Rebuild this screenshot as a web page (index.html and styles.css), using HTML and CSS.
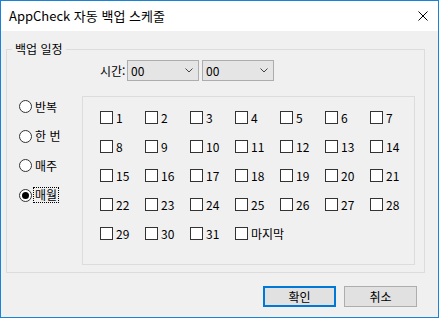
FILE: index.html
```html
<!doctype html>
<html lang="ko">

<head>
  <meta charset="utf-8">
  <link rel="stylesheet" href="styles.css">
  <title>AppCheck 자동 백업 스케줄</title>
</head>

<body>
  <div class="window">
    <div class="titlebar">
      <span class="title">AppCheck 자동 백업 스케줄</span>
      <svg class="close" viewBox="0 0 10 10">
        <path d="M0.5 0.5L9.5 9.5M9.5 0.5L0.5 9.5" stroke="#000" stroke-width="1" fill="none" />
      </svg>
    </div>
    <div class="content">
      <fieldset class="group">
        <legend>백업 일정</legend>
        <div class="time-row">
          <span class="time-label">시간:</span>
          <div class="combo">
            <span>00</span>
            <svg class="chevron" viewBox="0 0 8 5"><path d="M0.5 0.5L4 4L7.5 0.5" stroke="#444" fill="none" /></svg>
          </div>
          <div class="combo">
            <span>00</span>
            <svg class="chevron" viewBox="0 0 8 5"><path d="M0.5 0.5L4 4L7.5 0.5" stroke="#444" fill="none" /></svg>
          </div>
        </div>
        <div class="schedule">
          <div class="modes">
            <div class="radio"><span class="radio-mark"></span><span class="radio-text">반복</span></div>
            <div class="radio"><span class="radio-mark"></span><span class="radio-text">한 번</span></div>
            <div class="radio"><span class="radio-mark"></span><span class="radio-text">매주</span></div>
            <div class="radio checked"><span class="radio-mark"></span><span class="radio-text">매월</span></div>
          </div>
          <div class="days" id="days"></div>
        </div>
      </fieldset>
      <div class="buttons">
        <button class="btn default">확인</button>
        <button class="btn">취소</button>
      </div>
    </div>
  </div>
  <script>
    var days = document.getElementById("days")
    var labels = []
    for (var i = 1; i <= 31; i++) labels.push(String(i))
    labels.push("마지막")

    labels.forEach(function (text) {
      var item = document.createElement("div")
      item.className = "check"
      item.innerHTML = '<span class="box"></span><span class="check-text"></span>'
      item.querySelector(".check-text").textContent = text
      days.appendChild(item)
    })
  </script>
</body>

</html>
```

FILE: styles.css
```css
body {
  margin: 0;
  font-family: "Noto Sans CJK KR", "Noto Sans", sans-serif;
  font-size: 12px;
  color: #000;
}

.window {
  width: 439px;
  height: 318px;
  box-sizing: border-box;
  border: 1px solid #1883d7;
  background: #f0f0f0;
  display: flex;
  flex-direction: column;
}

.titlebar {
  height: 30px;
  flex: none;
  background: #fff;
  display: flex;
  align-items: center;
  justify-content: space-between;
  padding: 0 10px 0 8px;
}

.title {
  font-size: 13px;
  line-height: 16px;
}

.close {
  width: 10px;
  height: 10px;
}

.group {
  margin: 10px 0 0 5px;
  width: 419px;
  box-sizing: border-box;
  border: 1px solid #dcdcdc;
  padding: 0 0 7px 0;
  min-width: 0;
}

.group legend {
  margin-left: 5px;
  padding: 0 3px;
  line-height: 16px;
}

.time-row {
  display: flex;
  align-items: center;
  margin-top: 3px;
  padding-left: 93px;
}

.time-label {
  width: 25px;
  margin-right: 2px;
  white-space: nowrap;
  line-height: 16px;
}

.combo {
  width: 72px;
  height: 21px;
  box-sizing: border-box;
  border: 1px solid #adadad;
  background: #e5e5e5;
  display: flex;
  align-items: center;
  justify-content: space-between;
  padding: 0 5px 0 3px;
  line-height: 16px;
}

.combo + .combo {
  margin-left: 3px;
}

.chevron {
  width: 8px;
  height: 5px;
}

.schedule {
  display: flex;
  margin-top: 15px;
}

.modes {
  width: 75px;
  flex: none;
  box-sizing: border-box;
  padding: 4px 0 0 12px;
  display: flex;
  flex-direction: column;
  gap: 16.5px;
}

.radio {
  display: flex;
  align-items: center;
  height: 13px;
  white-space: nowrap;
}

.radio-mark {
  width: 13px;
  height: 13px;
  flex: none;
  box-sizing: border-box;
  border: 1px solid #333;
  border-radius: 50%;
  background: #fff;
  display: flex;
  align-items: center;
  justify-content: center;
  margin-right: 2px;
}

.radio-text {
  line-height: 12px;
  padding: 1px 1px;
  border: 1px solid transparent;
  margin-left: -1px;
}

.radio.checked .radio-mark::after {
  content: "";
  width: 7px;
  height: 7px;
  border-radius: 50%;
  background: #000;
}

.radio.checked .radio-text {
  border: 1px dotted #000;
}

.days {
  width: 333px;
  height: 169px;
  flex: none;
  box-sizing: border-box;
  border: 1px solid #dcdcdc;
  padding: 14px 0 0 17px;
  display: grid;
  grid-template-columns: repeat(7, 45px);
  grid-auto-rows: 13px;
  row-gap: 16px;
  align-content: start;
}

.check {
  display: flex;
  align-items: center;
  height: 13px;
  white-space: nowrap;
  line-height: 16px;
}

.box {
  width: 13px;
  height: 13px;
  flex: none;
  box-sizing: border-box;
  border: 1px solid #333;
  background: #fff;
  margin-right: 3px;
}

.buttons {
  display: flex;
  justify-content: flex-end;
  gap: 8px;
  margin-top: 13px;
  padding-right: 21px;
}

.btn {
  width: 73px;
  height: 21px;
  box-sizing: border-box;
  border: 1px solid #adadad;
  background: #e1e1e1;
  padding: 0;
  font: inherit;
  line-height: 16px;
  color: #000;
}

.btn.default {
  border: 2px solid #0078d7;
}
```
